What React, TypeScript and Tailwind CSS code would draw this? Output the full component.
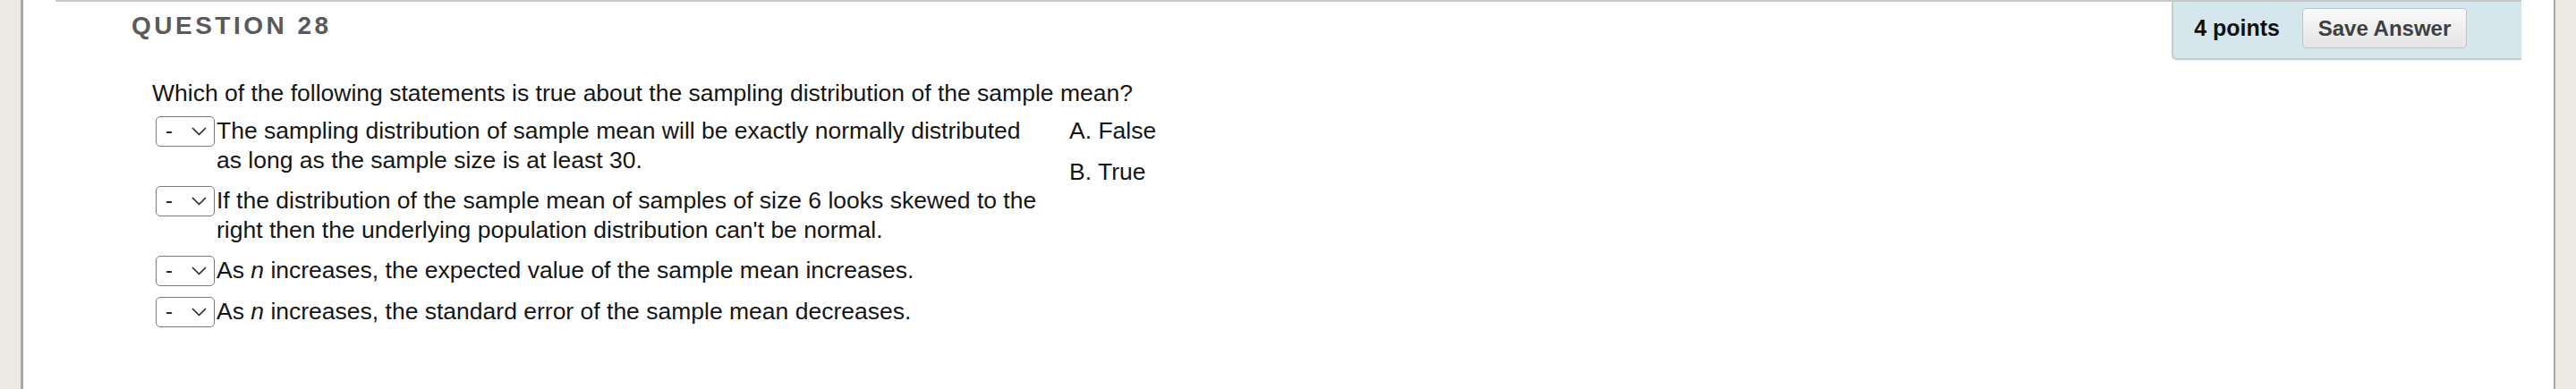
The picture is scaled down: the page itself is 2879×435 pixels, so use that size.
import React from "react";

const statements: { id: number; text: React.ReactNode }[] = [
  {
    id: 1,
    text: "The sampling distribution of sample mean will be exactly normally distributed as long as the sample size is at least 30.",
  },
  {
    id: 2,
    text: "If the distribution of the sample mean of samples of size 6 looks skewed to the right then the underlying population distribution can't be normal.",
  },
  {
    id: 3,
    text: (
      <>
        As <i>n</i> increases, the expected value of the sample mean increases.
      </>
    ),
  },
  {
    id: 4,
    text: (
      <>
        As <i>n</i> increases, the standard error of the sample mean decreases.
      </>
    ),
  },
];

const answers = ["A. False", "B. True"];

function Dropdown() {
  return (
    <div className="flex h-[34px] w-[66px] shrink-0 items-center justify-between rounded-[5px] border-[1.5px] border-[#7a7a7a] bg-white pl-[10px] pr-[8px] text-[24px] leading-none text-[#222]">
      <span className="-mt-[2px]">-</span>
      <svg width="17" height="10" viewBox="0 0 17 10" fill="none">
        <polyline points="1.5,1.5 8.5,8.5 15.5,1.5" stroke="#2a2a2a" strokeWidth="1.7" strokeLinecap="round" strokeLinejoin="round" />
      </svg>
    </div>
  );
}

export default function App() {
  return (
    <div
      className="flex h-[435px] w-full bg-[#edeae3] text-[#161616]"
      style={{ fontFamily: '"Liberation Sans", Arial, Helvetica, sans-serif' }}
    >
      <div className="w-[23px] shrink-0" />
      <div className="flex-1 border-l-[3px] border-r-[2px] border-[#a8a8a8] bg-white px-[36px]">
        {/* header */}
        <div className="flex items-start justify-between border-t-2 border-[#c9c9c9]">
          <div className="pl-[85px] pt-[12px] text-[28px] font-bold leading-[30px] tracking-[0.125em] text-[#5a5a5a]">
            QUESTION 28
          </div>
          <div className="flex h-[65px] items-center gap-[25px] rounded-bl-[6px] border-b-2 border-l-2 border-[#cbcbcb] bg-[#d5e7ed] pb-[4px] pl-[23px] pr-[61px] shadow-[0_1px_2px_rgba(0,0,0,0.08)]">
            <span className="text-[25px] font-bold text-[#111]">4 points</span>
            <button className="h-[45px] w-[184px] rounded-[4px] border border-[#c4c4c4] bg-gradient-to-b from-[#fafafa] to-[#e4e4e4] text-[24px] font-bold text-[#404040]">
              Save Answer
            </button>
          </div>
        </div>

        {/* body */}
        <div className="pl-[108px]">
          <p className="pt-[20px] text-[26.5px] leading-[35px]">
            Which of the following statements is true about the sampling distribution of the sample mean?
          </p>
          <div className="mt-[8px] flex items-start">
            <div className="flex flex-col gap-[12px] pl-[4px]">
              {statements.map((s) => (
                <div key={s.id} className="flex items-start gap-[2px]">
                  <Dropdown />
                  <div className="w-[924px] text-[26.5px] leading-[33px]">{s.text}</div>
                </div>
              ))}
            </div>
            <div className="ml-[29px] flex flex-col gap-[13px]">
              {answers.map((a) => (
                <div key={a} className="text-[26.5px] leading-[33px]">
                  {a}
                </div>
              ))}
            </div>
          </div>
        </div>
      </div>
      <div className="w-[23px] shrink-0" />
    </div>
  );
}
